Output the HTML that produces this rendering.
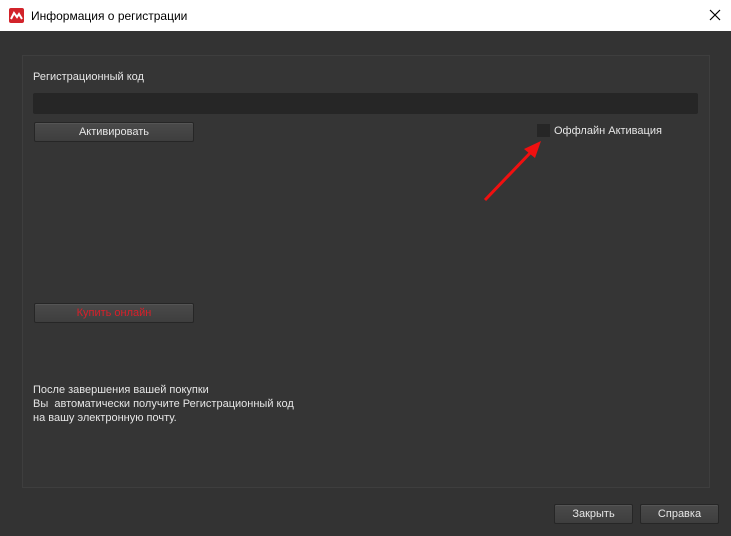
<!DOCTYPE html>
<html><head><meta charset="utf-8"><style>
body{margin:0;width:731px;height:536px;overflow:hidden;background:#333;font-family:"Liberation Sans","DejaVu Sans",sans-serif;font-size:11px;color:#e6e6e6;position:relative}
.abs{position:absolute}
.title{left:0;top:0;width:731px;height:31px;background:#fff;color:#000;font-size:12px}
.panel{left:22px;top:55px;width:686px;height:431px;border:1px solid #3e3e3e;background:#353535}
.btn{background:linear-gradient(#4a4a4a,#3e3e3e);border:1px solid #262626;border-radius:2px;text-align:center;line-height:18px;box-shadow:inset 0 1px 0 #555;font-size:11px;color:#e6e6e6}
</style></head><body>
<div class="abs title">
 <div class="abs" style="left:9px;top:8px;width:15px;height:15px;background:#d2232a;border-radius:2px"></div>
 <svg class="abs" style="left:9px;top:8px" width="15" height="15"><path d="M2 11 L5 5 L8 9 L10 6 L13 11" stroke="#fff" stroke-width="2" fill="none"/></svg>
 <div class="abs" style="left:31px;top:9px">Информация о регистрации</div>
 <svg class="abs" style="left:709px;top:9px" width="12" height="12"><path d="M1 1L11 11M11 1L1 11" stroke="#000" stroke-width="1.2"/></svg>
</div>
<div class="abs panel"></div>
<div class="abs" style="left:33px;top:71px">Регистрационный код</div>
<div class="abs" style="left:33px;top:93px;width:665px;height:21px;background:#262626;border-radius:2px"></div>
<div class="abs btn" style="left:34px;top:122px;width:158px;height:18px">Активировать</div>
<div class="abs" style="left:537px;top:124px;width:13px;height:13px;background:#262626"></div>
<div class="abs" style="left:554px;top:125px">Оффлайн Активация</div>
<svg class="abs" style="left:0;top:0" width="731" height="536"><line x1="485" y1="200" x2="532" y2="151" stroke="#f01010" stroke-width="3"/><polygon points="541,141 524,149 535,158" fill="#f01010"/></svg>
<div class="abs btn" style="left:34px;top:303px;width:158px;height:18px;color:#d8202a">Купить онлайн</div>
<div class="abs" style="left:33px;top:383px;line-height:14px">После завершения вашей покупки<br>Вы &nbsp;автоматически получите Регистрационный код<br>на вашу электронную почту.</div>
<div class="abs btn" style="left:554px;top:504px;width:77px;height:18px">Закрыть</div>
<div class="abs btn" style="left:640px;top:504px;width:77px;height:18px">Справка</div>
</body></html>
